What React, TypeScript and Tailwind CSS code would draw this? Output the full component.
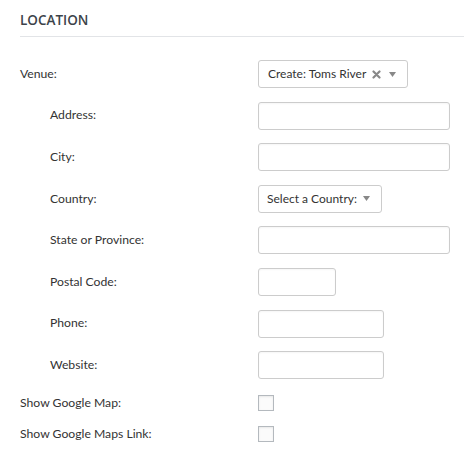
import React from "react";

const font = { fontFamily: 'Lato, "Open Sans", Arial, sans-serif' };

function Field({ label, indent, children }: { label: string; indent?: boolean; children: React.ReactNode }) {
  return (
    <div className="flex h-[28px] items-center">
      <div className={`w-[238px] shrink-0 text-[12.2px] text-[#333] ${indent ? "pl-[30px]" : ""}`}>{label}</div>
      {children}
    </div>
  );
}

function TextInput({ w }: { w: string }) {
  return <div className={`${w} h-[28px] rounded-[3px] border border-[#ccc] bg-white shadow-[inset_0_1px_2px_rgba(0,0,0,0.04)]`} />;
}

function Check({ label }: { label: string }) {
  return (
    <div className="flex h-[16px] items-center">
      <div className="w-[238px] shrink-0 text-[12.2px] text-[#333]">{label}</div>
      <div className="h-[16px] w-[16px] border border-[#b4b9be] bg-[#fbfbfb] shadow-[inset_0_1px_2px_rgba(0,0,0,0.08)]" />
    </div>
  );
}

function Arrow() {
  return (
    <svg width="7" height="5" viewBox="0 0 7 5" className="shrink-0">
      <path d="M0 0h7L3.5 5z" fill="#888" />
    </svg>
  );
}

function Cross() {
  return (
    <svg width="9" height="9" viewBox="0 0 9 9" className="shrink-0">
      <path d="M1.5 1.5l6 6M7.5 1.5l-6 6" stroke="#888" strokeWidth="2.2" strokeLinecap="round" />
    </svg>
  );
}

export default function App() {
  return (
    <div className="h-[452px] w-[464px] overflow-hidden bg-white pl-[20px]" style={font}>
      <div className="pt-[10px] pb-[6px] text-[13.5px] font-semibold leading-[20px] text-[#3c434a]" style={{ fontFamily: '"Open Sans", Arial, sans-serif' }}>LOCATION</div>
      <div className="h-px bg-[#e2e4e7]" />

      <div className="mt-[23px] flex flex-col gap-[13.6px]">
        <Field label="Venue:">
          <div className="flex h-[28px] w-[150px] items-center rounded-[3px] border border-[#ccc] bg-white pl-[9px] pr-[11px] text-[12px] text-[#333]">
            <span className="whitespace-nowrap">Create: Toms River</span>
            <span className="ml-[6px] flex"><Cross /></span>
            <span className="ml-auto flex"><Arrow /></span>
          </div>
        </Field>
        <Field label="Address:" indent>
          <TextInput w="w-[192px]" />
        </Field>
        <Field label="City:" indent>
          <TextInput w="w-[192px]" />
        </Field>
        <Field label="Country:" indent>
          <div className="flex h-[28px] w-[124px] items-center rounded-[3px] border border-[#ccc] bg-white pl-[8px] pr-[11px] text-[12px] text-[#333]">
            <span className="whitespace-nowrap">Select a Country:</span>
            <span className="ml-auto flex"><Arrow /></span>
          </div>
        </Field>
        <Field label="State or Province:" indent>
          <TextInput w="w-[192px]" />
        </Field>
        <Field label="Postal Code:" indent>
          <TextInput w="w-[78px]" />
        </Field>
        <Field label="Phone:" indent>
          <TextInput w="w-[126px]" />
        </Field>
        <Field label="Website:" indent>
          <TextInput w="w-[126px]" />
        </Field>
      </div>

      <div className="mt-[16px] flex flex-col gap-[15px]">
        <Check label="Show Google Map:" />
        <Check label="Show Google Maps Link:" />
      </div>
    </div>
  );
}
